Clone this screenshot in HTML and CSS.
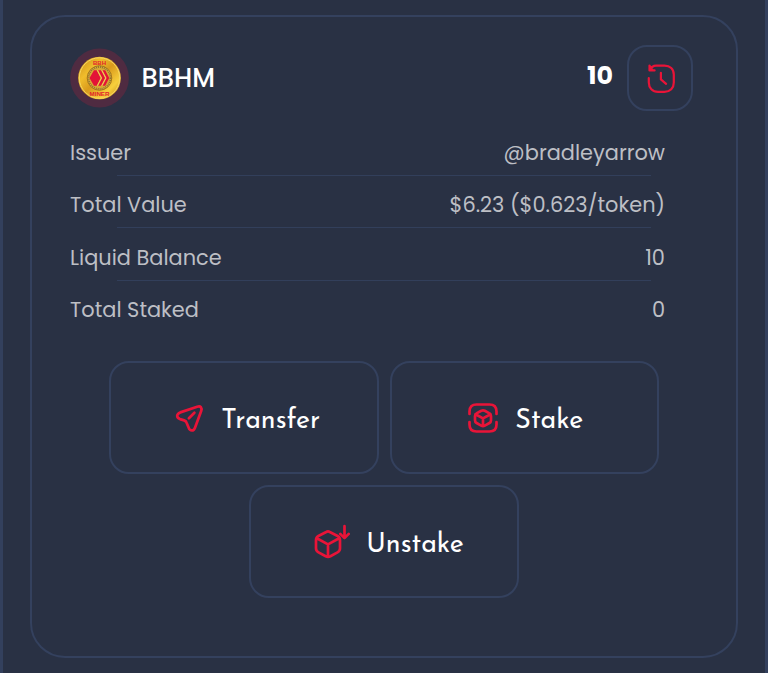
FILE: index.html
```html
<!DOCTYPE html>
<html lang="en">
<head>
    <meta charset="UTF-8">
    <meta name="viewport" content="width=device-width, initial-scale=1.0">
    <title>BBHM Token</title>
    <link rel="stylesheet" href="styles.css">
</head>
<body>
    <div class="panel">
        <div class="card">
            <div class="card-header">
                <div class="token-logo">
                    <svg width="60" height="60" viewBox="0 0 60 60">
                        <defs>
                            <linearGradient id="gold" x1="0" y1="0" x2="1" y2="1">
                                <stop offset="0" stop-color="#c98a14"/>
                                <stop offset="0.3" stop-color="#f0bd2c"/>
                                <stop offset="0.5" stop-color="#d99a1c"/>
                                <stop offset="0.75" stop-color="#f7cf3c"/>
                                <stop offset="1" stop-color="#c08212"/>
                            </linearGradient>
                        </defs>
                        <circle cx="29.5" cy="30" r="29.4" fill="#4f2b41"/>
                        <circle cx="29.5" cy="30" r="21.3" fill="url(#gold)"/>
                        <circle cx="29.5" cy="30" r="20.2" fill="none" stroke="#f6d662" stroke-width="1"/>
                        <circle cx="29.5" cy="30" r="12.3" fill="#ddb03c" stroke="#a97718" stroke-width="1"/>
                        <circle cx="29.5" cy="30" r="11" fill="#d9a833" stroke="#8c7434" stroke-width="1.8" stroke-dasharray="1 1"/>
                        <path d="M24 22.3h2.6l4 7.7-4 7.7H24L19.5 30z" fill="#e31337" stroke="none"/>
                        <path d="M28.2 22.3h2.8l4 7.7-4 7.7h-2.8l4-7.7zM32.6 22.3h2.6l4 7.7-4 7.7h-2.6l4-7.7z" fill="#e31337"/>
                        <path d="M27.4 22.3l4 7.7-4 7.7M31.8 22.3l4 7.7-4 7.7" fill="none" stroke="#f2c75a" stroke-width="1"/>
                        <text class="coin-text" x="29.5" y="16.6" font-size="6">BBH</text>
                        <text class="coin-text" x="29.5" y="47.6" font-size="6.2">MINER</text>
                    </svg>
                </div>
                <span class="token-name">BBHM</span>
                <span class="token-amount">10</span>
                <button class="history-button">
                    <svg width="32" height="32" viewBox="0 0 32 32">
                        <path d="M2.8 15.2v4.3c0 5.6 3.7 9.3 9.2 9.3h6.5c5.6 0 9.3-3.7 9.3-9.3V11.5C27.8 6 24.1 2.6 18.5 2.6H10C7.2 2.6 5.2 4.6 4.2 7.2M3.5 2.6V7.4H8.6M3.7 3L6.5 7M14.9 9.8v6.6l5.2 4.5"/>
                    </svg>
                </button>
            </div>

            <div class="details">
                <div class="detail-row"><span>Issuer</span><span>@bradleyarrow</span></div>
                <div class="detail-row"><span>Total Value</span><span>$6.23 ($0.623/token)</span></div>
                <div class="detail-row"><span>Liquid Balance</span><span>10</span></div>
                <div class="detail-row"><span>Total Staked</span><span>0</span></div>
            </div>

            <div class="actions">
                <button class="action transfer">
                    <svg width="32" height="32" viewBox="0 0 32 32">
                        <path d="M24.2 4.8L7.3 10.4C3.2 12 3.2 15.7 7 17.1L11.2 18.4C12.7 18.9 13.3 19.6 13.8 21.2L15.6 25.6C17 29.4 20.7 29.4 22 25.7L28.1 9.3C29.3 5.6 27.7 3.7 24.2 4.8ZM15.9 16.2L21.4 10.8"/>
                    </svg>
                    <span>Transfer</span>
                </button>
                <button class="action stake">
                    <svg width="32" height="32" viewBox="0 0 32 32">
                        <path d="M2.5 12V9.5C2.5 5 5 2.5 9.5 2.5h13C27 2.5 29.5 5 29.5 9.5V12M2.5 20v2.5C2.5 27 5 29.5 9.5 29.5h13c4.5 0 7-2.5 7-7V20M14.3 8.8L9.5 11.4C8.3 12 8 12.9 8 14.2v4c0 1.3.5 2.2 1.6 2.8l4.6 2.6c1.2.7 2.4.7 3.6 0l4.6-2.6c1.1-.6 1.6-1.5 1.6-2.8v-4c0-1.3-.5-2.2-1.6-2.8l-4.6-2.6c-1.2-.7-2.4-.7-3.5 0zM8.5 12.2l7.5 4.2 7.5-4.2M16 16.4v7.4"/>
                    </svg>
                    <span>Stake</span>
                </button>
                <button class="action unstake">
                    <svg width="38" height="36" viewBox="0 0 38 36">
                        <path d="M14.2 8L6.4 12C4.6 13 4 14.3 4 16.3v8c0 2 .8 3.2 2.5 4.1l7.2 3.8c1.6.8 3.1.8 4.7 0l7.1-3.8c1.7-.9 2.5-2.1 2.5-4.1v-8c0-2-.6-3.3-2.4-4.3L17.8 8c-1.2-.7-2.4-.7-3.6 0zM4.8 14.2L16 20.4 27.2 14.2M16 20.4V32.4M32.5 2.2v11.8M28.3 9.9l4.2 4.2 4.2-4.2"/>
                    </svg>
                    <span>Unstake</span>
                </button>
            </div>
        </div>
    </div>
</body>
</html>
```
FILE: styles.css
```css
* {
    box-sizing: border-box;
}

body {
    margin: 0;
    background: #293144;
    font-family: Poppins, Inter, sans-serif;
    color: white;
}

.panel {
    height: 673px;
    padding: 15px 27px 0 27px;
    border-left: 3px solid #33405d;
    border-right: 3px solid #33405d;
}

.card {
    width: 708px;
    height: 643px;
    padding: 28px 38px 0;
    border: 2px solid #34415e;
    border-radius: 35px;
}

.card-header {
    display: flex;
    align-items: center;
    height: 66px;
    padding-right: 5px;
}

.token-logo,
.token-logo svg {
    display: block;
    width: 60px;
    height: 60px;
}

.coin-text {
    font-family: "Liberation Sans", sans-serif;
    font-weight: bold;
    text-anchor: middle;
    fill: #e3252b;
}

.token-name {
    margin-left: 11.5px;
    font-size: 25.8px;
    font-weight: 500;
}

.token-amount {
    margin-left: auto;
    margin-right: 14px;
    padding-bottom: 5px;
    font-size: 25.3px;
    font-weight: 700;
}

button {
    display: flex;
    align-items: center;
    justify-content: center;
    padding: 0;
    border: 2px solid #34415e;
    background: transparent;
    color: white;
    cursor: pointer;
}

button svg {
    flex-shrink: 0;
    fill: none;
    stroke: #e91438;
    stroke-width: 2.7;
    stroke-linecap: round;
    stroke-linejoin: round;
}

.history-button {
    width: 66px;
    height: 66px;
    border-radius: 20px;
}

.history-button svg {
    margin: 2px 0 0 3px;
    stroke-width: 2.2;
}

.details {
    margin-top: 16px;
    padding-right: 33px;
}

.detail-row {
    display: flex;
    flex-wrap: wrap;
    justify-content: space-between;
    height: 52.3px;
    font-size: 20.9px;
    line-height: 51px;
    color: #bdbfc5;
}

/* Short divider under each row except the last */
.detail-row:not(:last-child)::after {
    content: "";
    width: 534px;
    height: 1px;
    margin: -3.5px 14px 0 47px;
    background: #323f5b;
}

.actions {
    display: flex;
    flex-wrap: wrap;
    justify-content: center;
    gap: 11px;
    margin-top: 25px;
}

.action {
    width: 269.5px;
    height: 113px;
    border-radius: 20px;
    font-family: "Josefin Sans", Lato, sans-serif;
    font-size: 26.8px;
    font-weight: 400;
}

.action span {
    margin-left: 16px;
    padding-top: 7px;
}

.transfer {
    padding-left: 6px;
}

.stake {
    padding-left: 2px;
}

.unstake {
    padding-left: 8px;
}
```
